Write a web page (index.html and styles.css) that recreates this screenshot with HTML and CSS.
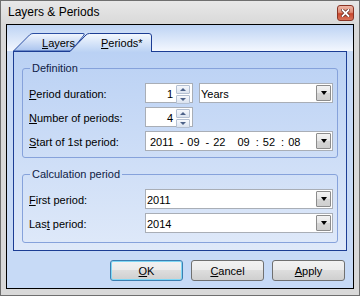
FILE: index.html
```html
<!DOCTYPE html>
<html lang="en">
<head>
  <meta charset="UTF-8" />
  <title>Layers &amp; Periods</title>
  <link rel="stylesheet" href="styles.css">
</head>
<body>
  <div class="window">
    <div class="titlebar">
      <span class="title">Layers &amp; Periods</span>
      <span class="close">
        <svg width="9" height="8" viewBox="0 0 9 8">
          <path d="M1.5 1 L7.5 7 M7.5 1 L1.5 7" stroke="#5a2018" stroke-width="3.2" stroke-linecap="square"/>
          <path d="M1.5 1 L7.5 7 M7.5 1 L1.5 7" stroke="#fff" stroke-width="1.8" stroke-linecap="square"/>
        </svg>
      </span>
    </div>

    <div class="client">
      <div class="tabs">
        <div class="tab tab-layers">
          <svg class="tab-shape" width="72" height="18" viewBox="0 0 72 18">
            <defs>
              <linearGradient id="gLayers" x1="0" y1="0" x2="0" y2="1">
                <stop offset="0" stop-color="#f3f7fe"/>
                <stop offset="1" stop-color="#a9c3ee"/>
              </linearGradient>
            </defs>
            <path d="M0.5 18 L16.5 2 Q18 0.5 20 0.5 L70 0.5 Q72 0.5 71 2 L58 18 Z" fill="url(#gLayers)" stroke="#2b4ea3"/>
          </svg>
          <span class="tab-label"><u>L</u>ayers</span>
        </div>
        <div class="tab tab-periods active">
          <svg class="tab-shape" width="82" height="19" viewBox="0 0 82 19">
            <defs>
              <linearGradient id="gPeriods" x1="0" y1="0" x2="0" y2="1">
                <stop offset="0" stop-color="#f5f9fe"/>
                <stop offset="1" stop-color="#bbd2f4"/>
              </linearGradient>
            </defs>
            <path d="M0 19 L0 18.5 L16 2 Q17.5 0.5 19.5 0.5 L79 0.5 Q81.5 0.5 81.5 3 L81.5 19 Z" fill="url(#gPeriods)"/>
            <path d="M0 18.5 L16 2 Q17.5 0.5 19.5 0.5 L79 0.5 Q81.5 0.5 81.5 3 L81.5 19" fill="none" stroke="#1c3d94"/>
          </svg>
          <span class="tab-label"><u>P</u>eriods*</span>
        </div>
      </div>

      <div class="panel">
        <fieldset class="group group-def">
          <legend>Definition</legend>
          <div class="row">
            <label class="lbl"><u>P</u>eriod duration:</label>
            <div class="spinner">
              <span class="spin-value">1</span>
              <span class="spin-btns"><span class="spin-btn up"></span><span class="spin-btn down"></span></span>
            </div>
            <div class="combo combo-units">
              <span class="combo-text">Years</span>
              <span class="drop-btn"></span>
            </div>
          </div>
          <div class="row">
            <label class="lbl"><u>N</u>umber of periods:</label>
            <div class="spinner">
              <span class="spin-value">4</span>
              <span class="spin-btns"><span class="spin-btn up"></span><span class="spin-btn down"></span></span>
            </div>
          </div>
          <div class="row">
            <label class="lbl"><u>S</u>tart of 1st period:</label>
            <div class="combo combo-date">
              <span class="combo-text date-text">
                <span>2011</span><span class="sep">-</span><span>09</span><span class="sep">-</span><span>22</span>
                <span class="time">09</span><span class="sep">:</span><span>52</span><span class="sep">:</span><span>08</span>
              </span>
              <span class="drop-btn"></span>
            </div>
          </div>
        </fieldset>

        <fieldset class="group group-calc">
          <legend>Calculation period</legend>
          <div class="row">
            <label class="lbl"><u>F</u>irst period:</label>
            <div class="combo combo-wide">
              <span class="combo-text">2011</span>
              <span class="drop-btn"></span>
            </div>
          </div>
          <div class="row">
            <label class="lbl">Las<u>t</u> period:</label>
            <div class="combo combo-wide">
              <span class="combo-text">2014</span>
              <span class="drop-btn"></span>
            </div>
          </div>
        </fieldset>
      </div>

      <div class="buttons">
        <button class="btn default"><u>O</u>K</button>
        <button class="btn"><u>C</u>ancel</button>
        <button class="btn"><u>A</u>pply</button>
      </div>
    </div>
  </div>
</body>
</html>
```

FILE: styles.css
```css
body {
  margin: 0;
  font-family: "Liberation Sans", Arial, sans-serif;
  font-size: 11px;
  color: #000;
}
u {
  text-decoration-thickness: 1px;
  text-underline-offset: 1px;
}
.window {
  width: 360px;
  height: 296px;
  box-sizing: border-box;
  border: 1px solid #6f6f6f;
  background: linear-gradient(#e8e8e8, #d8d8d8 24px, #d9d9d9);
  padding: 0 5px 6px;
  display: flex;
  flex-direction: column;
}
.titlebar {
  height: 23px;
  display: flex;
  justify-content: space-between;
  align-items: flex-start;
  padding-left: 2px;
}
.title {
  font-size: 12px;
  line-height: 23px;
  color: #000;
}
.close {
  width: 17px;
  height: 16px;
  margin-top: 4px;
  box-sizing: border-box;
  border: 1px solid #8a3324;
  border-radius: 3px;
  background: linear-gradient(#eeb6a6, #df8c76 45%, #c9462c 55%, #d8735a);
  display: flex;
  align-items: center;
  justify-content: center;
}
.client {
  flex: 1;
  border: 1px solid #000;
  background: linear-gradient(#bdd3f4, #f3f7fe 26px, #c7daf6 26px);
}

/* tabs */
.tabs {
  display: flex;
  height: 18px;
  margin: 8px 0 0 6px;
  position: relative;
  z-index: 1;
}
.tab {
  position: relative;
  height: 18px;
}
.tab-shape {
  position: absolute;
  left: 0;
  top: 0;
}
.tab-label {
  position: relative;
  display: block;
  line-height: 18px;
  padding-top: 1px;
}
.tab-layers {
  width: 72px;
}
.tab-layers .tab-label {
  padding-left: 29px;
}
.tab-periods {
  width: 82px;
  margin-left: -15px;
}
.tab-periods .tab-label {
  padding-left: 31px;
}

.panel {
  height: 200px;
  box-sizing: border-box;
  margin: 0 6px;
  border: 1px solid #1c3d94;
  background: linear-gradient(#bad1f4, #dfe9f9);
  padding: 10px 8px 0;
}

/* group boxes */
.group {
  margin: 0;
  border: 1px solid #86a2db;
  border-radius: 3px;
  padding: 8px 4px 6px 6px;
}
.group legend {
  margin-left: 1px;
  padding: 0 2px;
  line-height: 13px;
  color: #0f1b45;
}
.group-calc {
  margin-top: 10px;
  padding-bottom: 9px;
}
.row {
  display: flex;
  align-items: center;
  height: 20px;
}
.row + .row {
  margin-top: 4px;
}
.lbl {
  width: 116px;
  line-height: 20px;
  padding-top: 2px;
}

/* numeric up/down */
.spinner {
  width: 48px;
  height: 20px;
  box-sizing: border-box;
  border: 1px solid #a9aeb6;
  background: #fff;
  display: flex;
  align-items: flex-start;
}
.spin-value {
  flex: 1;
  text-align: right;
  line-height: 18px;
  padding: 1px 3px 0 0;
}
.spin-btns {
  width: 14px;
  margin: 1px 2px 0 0;
  display: flex;
  flex-direction: column;
  gap: 1px;
}
.spin-btn {
  height: 7px;
  border: 1px solid #b4c0d2;
  border-radius: 1px;
  background: linear-gradient(#f6f8fc, #dbe3ef);
  display: flex;
  align-items: center;
  justify-content: center;
}
.spin-btn::after {
  content: "";
  border-left: 3px solid transparent;
  border-right: 3px solid transparent;
}
.spin-btn.up::after {
  border-bottom: 3px solid #4d6289;
}
.spin-btn.down::after {
  border-top: 3px solid #4d6289;
}

/* combo boxes */
.combo {
  height: 20px;
  box-sizing: border-box;
  border: 1px solid #a9aeb6;
  background: #fff;
  display: flex;
  align-items: flex-start;
}
.combo-units {
  width: 134px;
  margin-left: 6px;
}
.combo-date,
.combo-wide {
  width: 188px;
}
.combo-text {
  flex: 1;
  line-height: 18px;
  padding: 1px 0 0 1px;
}
.combo-date .combo-text {
  padding-left: 4px;
}
.date-text {
  display: flex;
}
.date-text .sep {
  margin: 0 4px 0 6px;
}
.date-text .time {
  margin-left: 12px;
}
.drop-btn {
  width: 15px;
  height: 16px;
  box-sizing: border-box;
  margin: 1px 1px 0 0;
  border: 1px solid #8c8c8c;
  border-radius: 1px;
  background: linear-gradient(#f3f3f3, #e6e6e6 50%, #d6d6d6 50%, #cfcfcf);
  display: flex;
  align-items: center;
  justify-content: center;
}
.drop-btn::after {
  content: "";
  border-left: 3.5px solid transparent;
  border-right: 3.5px solid transparent;
  border-top: 4px solid #000;
}

/* dialog buttons */
.buttons {
  display: flex;
  justify-content: flex-end;
  gap: 8px;
  margin-top: 9px;
  padding-right: 8px;
}
.btn {
  width: 73px;
  height: 21px;
  padding: 0;
  box-sizing: border-box;
  border: 1px solid #707070;
  border-radius: 3px;
  background: linear-gradient(#f2f2f2, #ebebeb 50%, #dddddd 50%, #cfcfcf);
  font-family: inherit;
  font-size: 11px;
  color: #000;
}
.btn.default {
  border-color: #3c7fb1;
  box-shadow: inset 0 0 0 1px #7fd7f5;
}
```
